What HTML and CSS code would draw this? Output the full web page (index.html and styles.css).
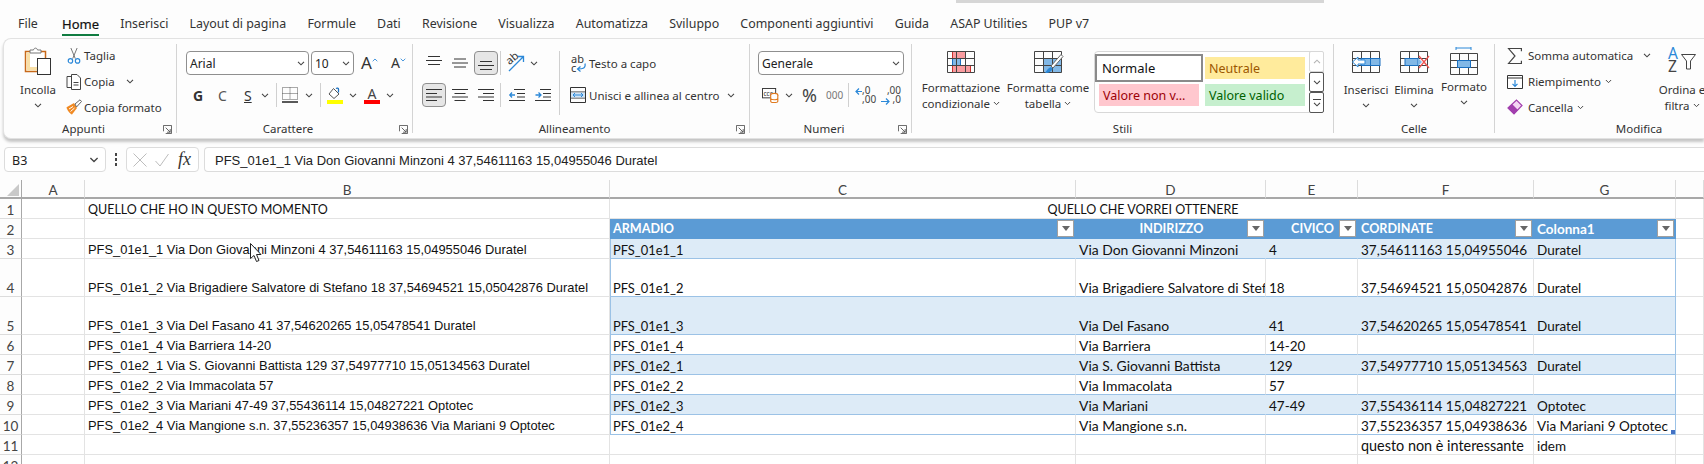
FILE: index.html
```html
<!DOCTYPE html>
<html lang="it">
<head>
<meta charset="utf-8">
<title>Excel</title>
<link rel="stylesheet" href="styles.css">
</head>
<body>
<svg class="defs" aria-hidden="true">
  <symbol id="chev" viewBox="0 0 8 5"><path d="M1 .8 4 3.8 7 .8" fill="none" stroke="#444" stroke-width="1.1"/></symbol>
  <symbol id="launch" viewBox="0 0 10 10"><path d="M.5 7V.5H9.500V9.500H3M3 3 8 8M8 4.500V8H4.500" fill="none" stroke="#555" stroke-width="1"/></symbol>
  <symbol id="lines-l" viewBox="0 0 16 14"><path d="M0 1.500H16M0 5.500H11M0 9H16M0 12.500H11" stroke="#333" fill="none"/></symbol>
  <symbol id="lines-c" viewBox="0 0 16 14"><path d="M0 1.500H16M2.500 5.500H13.500M0 9H16M2.500 12.500H13.500" stroke="#333" fill="none"/></symbol>
  <symbol id="lines-r" viewBox="0 0 16 14"><path d="M0 1.500H16M5 5.500H16M0 9H16M5 12.500H16" stroke="#333" fill="none"/></symbol>
  <symbol id="grid" viewBox="0 0 28 22"><path d="M.5.500H27.500V21.500H.5ZM.5 7.500H27.500M.5 14.500H27.500M9.500.5V21.500M18.500.5V21.500" fill="none" stroke="#444"/></symbol>
</svg>

<div class="topshade"></div>
<nav class="tabs">
  <span class="tab">File</span>
  <span class="tab tab-on">Home</span>
  <span class="tab">Inserisci</span>
  <span class="tab">Layout di pagina</span>
  <span class="tab">Formule</span>
  <span class="tab">Dati</span>
  <span class="tab">Revisione</span>
  <span class="tab">Visualizza</span>
  <span class="tab">Automatizza</span>
  <span class="tab">Sviluppo</span>
  <span class="tab">Componenti aggiuntivi</span>
  <span class="tab">Guida</span>
  <span class="tab">ASAP Utilities</span>
  <span class="tab">PUP v7</span>
</nav>

<section class="ribbon">
  <div class="group g-app">
    <div class="gbody">
      <div class="big b-paste">
        <svg class="ic-paste" viewBox="0 0 28 28"><path d="M1.500 4.500H21.500V24.500H1.500Z" fill="#fff" stroke="#c8691a" stroke-width="1.500"/><path d="M2.500 5.500H6V20H13V23.500H2.500Z" fill="#f9dfa6"/><path d="M6 6V3H9.500C10 .5 13 .5 13.500 3H17V6Z" fill="#fff" stroke="#777"/><rect x="13.500" y="11.500" width="13" height="16" fill="#fff" stroke="#333"/></svg>
        <span class="bt">Incolla</span>
        <svg class="chev ch-big"><use href="#chev"/></svg>
      </div>
      <div class="stack3 s-clip">
        <div class="srow"><span class="si"><svg class="i16" viewBox="0 0 16 18"><path d="M4.500 0 9.500 12M11.500 0 6.500 12" stroke="#666" fill="none"/><circle cx="4" cy="14.500" r="2.500" fill="none" stroke="#2b88d8" stroke-width="1.300"/><circle cx="12" cy="14.500" r="2.500" fill="none" stroke="#2b88d8" stroke-width="1.300"/></svg></span><span class="st">Taglia</span></div>
        <div class="srow"><span class="si"><svg class="i16" viewBox="0 0 16 16"><path d="M5 2.500H1V13.500H5" fill="none" stroke="#444"/><path d="M5.500.5H11L14.500 4V15.500H5.500Z" fill="#fff" stroke="#444"/><path d="M7.500 8.500H12.500M7.500 11H12.500" stroke="#444"/></svg></span><span class="st w-copia">Copia</span><svg class="chev"><use href="#chev"/></svg></div>
        <div class="srow"><span class="si"><svg class="i16" viewBox="0 0 16 16"><path d="M1 8 8 4 11 9 6 15.500C4 15 1 11 .5 8.500Z" fill="#f08a24"/><path d="M3 10 7 7.500M4.500 12.500 8.500 9" stroke="#fff"/><path d="M9 5 14 .8 15.500 2.500 10.500 8Z" fill="#fff" stroke="#666"/></svg></span><span class="st">Copia formato</span></div>
      </div>
    </div>
    <div class="glabel"><span class="gl">Appunti</span><svg class="launch"><use href="#launch"/></svg></div>
  </div>

  <div class="group g-car">
    <div class="gbody">
      <div class="stack2">
        <div class="crow">
          <div class="combo c-font"><span>Arial</span><svg class="chev"><use href="#chev"/></svg></div>
          <div class="combo c-size"><span>10</span><svg class="chev"><use href="#chev"/></svg></div>
          <span class="ab a-grow">A<svg class="caret" viewBox="0 0 7 4"><path d="M.8 3.500 3.500.8 6.200 3.500" fill="none" stroke="#2b88d8"/></svg></span>
          <span class="ab a-shrink">A<svg class="caret" viewBox="0 0 7 4"><path d="M.8.5 3.500 3.200 6.200.5" fill="none" stroke="#2b88d8"/></svg></span>
        </div>
        <div class="crow r-fmt">
          <b class="l-g">G</b><span class="l-c">C</span><span class="l-s">S</span>
          <svg class="chev ch-s"><use href="#chev"/></svg>
          <i class="vsep vs-1"></i>
          <svg class="i16 ic-bord" viewBox="0 0 16 16"><path d="M.5.500H15.500V12.500H.5ZM8 .5V12.500M.5 6.500H15.500" fill="none" stroke="#555" stroke-dasharray="1 1"/><path d="M0 15H16" stroke="#222" stroke-width="1.400"/></svg>
          <svg class="chev ch-b"><use href="#chev"/></svg>
          <i class="vsep vs-2"></i>
          <span class="colorbtn cb-fill"><svg class="i16" viewBox="0 0 16 12"><path d="M6.500 1.500 12 7 7 11.500 2 7Z" fill="#fff" stroke="#555"/><path d="M11.500 5.500V2C11.500 1 10 .8 9 1.500" fill="none" stroke="#1a6fc0" stroke-width="1.300"/></svg><i class="bar bar-y"></i></span>
          <svg class="chev ch-f"><use href="#chev"/></svg>
          <span class="colorbtn cb-a"><span class="fa">A</span><i class="bar bar-r"></i></span>
          <svg class="chev ch-a"><use href="#chev"/></svg>
        </div>
      </div>
    </div>
    <div class="glabel"><span class="gl">Carattere</span><svg class="launch"><use href="#launch"/></svg></div>
  </div>

  <div class="group g-all">
    <div class="gbody">
      <div class="stack2 s-al">
        <div class="crow">
          <span class="tb"><svg class="i-al" viewBox="0 0 16 14"><path d="M2 .5H14M0 4.500H16M2 8.500H14" stroke="#333" fill="none"/></svg></span>
          <span class="tb"><svg class="i-al" viewBox="0 0 16 14"><path d="M2 3H14M0 7H16M2 11H14" stroke="#333" fill="none"/></svg></span>
          <span class="tb tb-on"><svg class="i-al" viewBox="0 0 16 14"><path d="M2 5.500H14M0 9.500H16M2 13.500H14" stroke="#333" fill="none"/></svg></span>
          <i class="vsep vs-al"></i>
          <span class="tb tb-or"><svg class="i18" viewBox="0 0 18 18"><text x="0" y="9" class="svgt" transform="rotate(-40 4 8)">ab</text><path d="M1 17 15 3M10 2.500H15.500V8" fill="none" stroke="#2b88d8" stroke-width="1.300"/></svg></span>
          <svg class="chev"><use href="#chev"/></svg>
        </div>
        <div class="crow">
          <span class="tb tb-on"><svg class="i-al" viewBox="0 0 16 14"><use href="#lines-l"/></svg></span>
          <span class="tb"><svg class="i-al" viewBox="0 0 16 14"><use href="#lines-c"/></svg></span>
          <span class="tb"><svg class="i-al" viewBox="0 0 16 14"><use href="#lines-r"/></svg></span>
          <i class="vsep vs-al"></i>
          <span class="tb tb-in"><svg class="i-al" viewBox="0 0 16 14"><path d="M5 1.500H16M8 5.500H16M8 9H16M0 12.500H16" stroke="#333" fill="none"/><path d="M.5 7H6M3 4.500.8 7 3 9.500" stroke="#2b88d8" fill="none" stroke-width="1.300"/></svg></span>
          <span class="tb tb-in2"><svg class="i-al" viewBox="0 0 16 14"><path d="M5 1.500H16M8 5.500H16M8 9H16M0 12.500H16" stroke="#333" fill="none"/><path d="M.5 7H6M3.500 4.500 6 7 3.500 9.500" stroke="#2b88d8" fill="none" stroke-width="1.300"/></svg></span>
        </div>
      </div>
      <i class="vsep vs-tall"></i>
      <div class="stack2 s-wrap">
        <div class="crow wr"><span class="wic"><span class="abc">ab<br>c</span><svg class="warrow" viewBox="0 0 10 9"><path d="M9 .5C10 5 7 6 2 6M4.500 3.500 1.500 6 4.500 8.500" fill="none" stroke="#2b88d8" stroke-width="1.200"/></svg></span><span class="st">Testo a capo</span></div>
        <div class="crow wr"><svg class="i-merge" viewBox="0 0 16 16"><path d="M.5.500H15.500V15.500H.5ZM.5 5H15.500M.5 11H15.500" fill="none" stroke="#333"/><rect x="1" y="5.500" width="14" height="5" fill="#cfe4f7"/><path d="M3 8H13M5 6 3 8 5 10M11 6 13 8 11 10" fill="none" stroke="#2b88d8"/></svg><span class="st w-merge">Unisci e allinea al centro</span><svg class="chev"><use href="#chev"/></svg></div>
      </div>
    </div>
    <div class="glabel"><span class="gl">Allineamento</span><svg class="launch"><use href="#launch"/></svg></div>
  </div>

  <div class="group g-num">
    <div class="gbody">
      <div class="stack2 s-num">
        <div class="combo c-gen"><span>Generale</span><svg class="chev"><use href="#chev"/></svg></div>
        <div class="crow r-num">
          <svg class="i-acc" viewBox="0 0 18 16"><rect x=".5" y=".5" width="14" height="10" fill="#fff" stroke="#333"/><text x="1.500" y="8" class="svgs">ccc</text><ellipse cx="13" cy="7.500" rx="3.800" ry="1.800" fill="#fff" stroke="#e07a1f" stroke-width="1.200"/><path d="M9.200 7.500V14C9.200 16 16.800 16 16.800 14V7.500M9.200 11C9.200 13 16.800 13 16.800 11" fill="#fff" stroke="#e07a1f" stroke-width="1.200"/></svg>
          <svg class="chev ch-acc"><use href="#chev"/></svg>
          <span class="pct">%</span>
          <span class="mil">000</span>
          <i class="vsep vs-num"></i>
          <span class="dec d1"><svg class="darr" viewBox="0 0 7 9"><path d="M7 4.500H1M4 1.500 1 4.500 4 7.500" fill="none" stroke="#2b88d8" stroke-width="1.200"/></svg><span class="dtx">,0<br>,00</span></span>
          <span class="dec d2"><span class="dtx tr">,00<br>,0</span><svg class="darr da2" viewBox="0 0 9 9"><path d="M0 4.500H8M5 1.500 8 4.500 5 7.500" fill="none" stroke="#2b88d8" stroke-width="1.200"/></svg></span>
        </div>
      </div>
    </div>
    <div class="glabel"><span class="gl">Numeri</span><svg class="launch"><use href="#launch"/></svg></div>
  </div>

  <div class="group g-sti">
    <div class="gbody">
      <div class="big b-cf">
        <svg class="ic-grid" viewBox="0 0 28 22"><rect x="5.500" y=".5" width="13" height="7" fill="#f99ca0" stroke="#c9302c"/><rect x="5.500" y="7.500" width="8" height="7" fill="#82b8e6" stroke="#1a6fc0"/><rect x="5.500" y="14.500" width="18" height="7" fill="#f99ca0" stroke="#c9302c"/><use href="#grid" width="28" height="22"/></svg>
        <span class="bt">Formattazione</span>
        <span class="bt">condizionale<svg class="chev ch-in"><use href="#chev"/></svg></span>
      </div>
      <div class="big b-tf">
        <svg class="ic-grid" viewBox="0 0 28 22"><rect x="9.500" y="7.500" width="18" height="14" fill="#82b8e6"/><use href="#grid" width="28" height="22"/><path d="M11 22C13 19 14 17 17 16 19 17 19 19 17 20 15 22 13 22 11 22Z" fill="#2b88d8"/><path d="M17 15 27 3.500 29 5.500 19 17Z" fill="#fff" stroke="#666"/></svg>
        <span class="bt">Formatta come</span>
        <span class="bt">tabella<svg class="chev ch-in"><use href="#chev"/></svg></span>
      </div>
      <div class="gallery">
        <div class="gcells">
          <span class="sty sty-norm">Normale</span>
          <span class="sty sty-neu">Neutrale</span>
          <span class="sty sty-bad">Valore non v...</span>
          <span class="sty sty-good">Valore valido</span>
        </div>
        <div class="gscroll">
          <span class="gs gs-off"><svg class="chev"><use href="#chev"/></svg></span>
          <span class="gs"><svg class="chev"><use href="#chev"/></svg></span>
          <span class="gs gs-more"><i class="gs-line"></i><svg class="chev"><use href="#chev"/></svg></span>
        </div>
      </div>
    </div>
    <div class="glabel"><span class="gl">Stili</span></div>
  </div>

  <div class="group g-cel">
    <div class="gbody">
      <div class="big b-cell b-ins">
        <svg class="ic-grid" viewBox="0 0 28 22"><use href="#grid" width="28" height="22"/><rect x="9" y="7.500" width="19" height="7" fill="#82b8e6" stroke="#1a6fc0"/><path d="M18.500 7.500V14.500" stroke="#1a6fc0"/><path d="M13 9H6V6L.5 11 6 16V13H13Z" fill="#fff" stroke="#2b88d8"/></svg>
        <span class="bt">Inserisci</span>
        <svg class="chev ch-big"><use href="#chev"/></svg>
      </div>
      <div class="big b-cell b-eli">
        <svg class="ic-grid" viewBox="0 0 28 22"><use href="#grid" width="28" height="22"/><rect x="5" y="7.500" width="13" height="7" fill="#82b8e6" stroke="#1a6fc0"/><path d="M18 7 22 11 18 15Z" fill="#82b8e6"/><path d="M19 5 29 17M29 5 19 17" stroke="#ef5350" stroke-width="1.300"/></svg>
        <span class="bt">Elimina</span>
        <svg class="chev ch-big"><use href="#chev"/></svg>
      </div>
      <div class="big b-cell b-for">
        <svg class="ic-fmt" viewBox="0 0 28 28"><path d="M6 1H21M6 0V3M21 0V3" stroke="#2b88d8" fill="none"/><g transform="translate(0 6)"><use href="#grid" width="28" height="22"/><rect x="7.500" y="7.500" width="13" height="7" fill="#82b8e6" stroke="#1a6fc0"/></g></svg>
        <span class="bt">Formato</span>
        <svg class="chev ch-big"><use href="#chev"/></svg>
      </div>
    </div>
    <div class="glabel"><span class="gl">Celle</span></div>
  </div>

  <div class="group g-mod">
    <div class="gbody">
      <div class="stack3 s-mod">
        <div class="srow"><span class="si"><svg class="i16" viewBox="0 0 14 15"><path d="M13 3V.5H1L7 7.500 1 14.500H13V12" fill="none" stroke="#444" stroke-width="1.100"/></svg></span><span class="st w-som">Somma automatica</span><svg class="chev"><use href="#chev"/></svg></div>
        <div class="srow"><span class="si"><svg class="i16" viewBox="0 0 16 16"><path d="M.5 1.500H15.500V14.500H.5Z" fill="#fff" stroke="#333"/><path d="M.5 4H15.500" stroke="#333"/><path d="M8 6V12M5.500 9.800 8 12.300 10.500 9.800" fill="none" stroke="#2b88d8" stroke-width="1.200"/></svg></span><span class="st">Riempimento</span><svg class="chev ch-tx"><use href="#chev"/></svg></div>
        <div class="srow"><span class="si"><svg class="i16" viewBox="0 0 16 16"><path d="M1 9 9.500 1 15 6.500 7 15Z" fill="#f4d6f4" stroke="#a23fae" stroke-width="1.200"/><path d="M1 9 5 5 11 11 7 15Z" fill="#a23fae"/></svg></span><span class="st">Cancella</span><svg class="chev ch-tx"><use href="#chev"/></svg></div>
      </div>
      <div class="big b-sort">
        <span class="sorti"><span class="az"><span class="az-a">A</span><span class="az-z">Z</span></span><svg class="funnel" viewBox="0 0 15 16"><path d="M.5.500H14.500L9.500 7V15H5.500V7Z" fill="#fff" stroke="#444"/></svg></span>
        <span class="bt">Ordina e</span>
        <span class="bt">filtra<svg class="chev ch-in"><use href="#chev"/></svg></span>
      </div>
    </div>
    <div class="glabel"><span class="gl">Modifica</span></div>
  </div>
</section>

<div class="fbar">
  <div class="namebox"><span>B3</span><svg class="chev ch-nm"><use href="#chev"/></svg></div>
  <span class="dots"></span>
  <div class="fbtns">
    <svg class="fb" viewBox="0 0 14 14"><path d="M.5.500 13.500 13.500M13.500.500 .5 13.500" stroke="#bdbdbd" fill="none"/></svg>
    <svg class="fb" viewBox="0 0 14 14"><path d="M.5 8 5 13 13.500 1" stroke="#bdbdbd" fill="none"/></svg>
    <span class="fx">fx</span>
  </div>
  <div class="finput">PFS_01e1_1 Via Don Giovanni Minzoni 4 37,54611163 15,04955046 Duratel</div>
</div>

<table class="sheet">
  <colgroup><col class="k0"><col class="k1"><col class="k2"><col class="k3"><col class="k4"><col class="k5"><col class="k6"><col class="k7"><col class="k8"></colgroup>
  <tr class="rh">
    <th class="corner"><svg class="tri" viewBox="0 0 12 12"><path d="M12 0V12H0Z" fill="#c9c9c9"/></svg></th><th>A</th><th>B</th><th>C</th><th>D</th><th>E</th><th>F</th><th>G</th><th></th>
  </tr>
  <tr class="r20">
    <td class="rn">1</td><td></td><td class="ar cal">QUELLO CHE HO IN QUESTO MOMENTO</td><td colspan="5" class="mid">QUELLO CHE VORREI OTTENERE</td><td></td>
  </tr>
  <tr class="r20 thd">
    <td class="rn">2</td><td></td><td></td>
    <td class="h"><div class="hd"><span class="cp">ARMADIO</span><i class="flt"></i></div></td>
    <td class="h"><div class="hd"><span class="ctr cp">INDIRIZZO</span><i class="flt"></i></div></td>
    <td class="h"><div class="hd"><span class="ctr cp">CIVICO</span><i class="flt"></i></div></td>
    <td class="h"><div class="hd"><span class="cp">CORDINATE</span><i class="flt"></i></div></td>
    <td class="h"><div class="hd"><span>Colonna1</span><i class="flt"></i></div></td>
    <td></td>
  </tr>
  <tr class="r20 sh">
    <td class="rn">3</td><td></td><td class="ar">PFS_01e1_1 Via Don Giovanni Minzoni 4 37,54611163 15,04955046 Duratel</td>
    <td class="t tf">PFS_01e1_1</td><td class="t va">Via Don Giovanni Minzoni</td><td class="t">4</td><td class="t">37,54611163 15,04955046</td><td class="t tl">Duratel</td><td></td>
  </tr>
  <tr class="r38">
    <td class="rn">4</td><td></td><td class="ar">PFS_01e1_2 Via Brigadiere Salvatore di Stefano 18 37,54694521 15,05042876 Duratel</td>
    <td class="t tf">PFS_01e1_2</td><td class="t va">Via Brigadiere Salvatore di Stefano</td><td class="t">18</td><td class="t">37,54694521 15,05042876</td><td class="t tl">Duratel</td><td></td>
  </tr>
  <tr class="r38 sh">
    <td class="rn">5</td><td></td><td class="ar">PFS_01e1_3 Via Del Fasano 41 37,54620265 15,05478541 Duratel</td>
    <td class="t tf">PFS_01e1_3</td><td class="t va">Via Del Fasano</td><td class="t">41</td><td class="t">37,54620265 15,05478541</td><td class="t tl">Duratel</td><td></td>
  </tr>
  <tr class="r20">
    <td class="rn">6</td><td></td><td class="ar">PFS_01e1_4 Via Barriera 14-20</td>
    <td class="t tf">PFS_01e1_4</td><td class="t va">Via Barriera</td><td class="t">14-20</td><td class="t"></td><td class="t tl"></td><td></td>
  </tr>
  <tr class="r20 sh">
    <td class="rn">7</td><td></td><td class="ar">PFS_01e2_1 Via S. Giovanni Battista 129 37,54977710 15,05134563 Duratel</td>
    <td class="t tf">PFS_01e2_1</td><td class="t va">Via S. Giovanni Battista</td><td class="t">129</td><td class="t">37,54977710 15,05134563</td><td class="t tl">Duratel</td><td></td>
  </tr>
  <tr class="r20">
    <td class="rn">8</td><td></td><td class="ar">PFS_01e2_2 Via Immacolata 57</td>
    <td class="t tf">PFS_01e2_2</td><td class="t va">Via Immacolata</td><td class="t">57</td><td class="t"></td><td class="t tl"></td><td></td>
  </tr>
  <tr class="r20 sh">
    <td class="rn">9</td><td></td><td class="ar">PFS_01e2_3 Via Mariani 47-49 37,55436114 15,04827221 Optotec</td>
    <td class="t tf">PFS_01e2_3</td><td class="t va">Via Mariani</td><td class="t">47-49</td><td class="t">37,55436114 15,04827221</td><td class="t tl">Optotec</td><td></td>
  </tr>
  <tr class="r20">
    <td class="rn">10</td><td></td><td class="ar">PFS_01e2_4 Via Mangione s.n. 37,55236357 15,04938636 Via Mariani 9 Optotec</td>
    <td class="t tf">PFS_01e2_4</td><td class="t va">Via Mangione s.n.</td><td class="t"></td><td class="t">37,55236357 15,04938636</td><td class="t tl tcorner">Via Mariani 9 Optotec<i class="grip"></i></td><td></td>
  </tr>
  <tr class="r20">
    <td class="rn">11</td><td></td><td></td><td></td><td></td><td></td><td class="q">questo non è interessante</td><td>idem</td><td></td>
  </tr>
  <tr class="r20">
    <td class="rn">12</td><td></td><td></td><td></td><td></td><td></td><td></td><td></td><td></td>
  </tr>
</table>

<svg class="cursor" viewBox="0 0 11 19"><path d="M.5.500V15.500L4 12.500 6.500 18.500 9 17.500 6.500 11.500H11Z" fill="#fff" stroke="#222"/></svg>
</body>
</html>
```
FILE: styles.css
```css
* { box-sizing: border-box; }
html, body { margin: 0; padding: 0; height: 464px; overflow: hidden; }
body {
  background: #fdfdfd;
  color: #222;
  font-family: "Noto Sans", "Open Sans", sans-serif;
  font-size: 11.5px;
  position: relative;
}
.defs { position: absolute; width: 0; height: 0; }
svg { display: block; flex: none; overflow: visible; }
i { display: block; font-style: normal; }

.topshade { height: 3px; width: 368px; margin-left: 956px; background: #d6d6d6; }

/* tabs */
.tabs { height: 35px; display: flex; padding-left: 18px; gap: 21.2px; }
.tab { font-size: 12.4px; line-height: 16px; padding-top: 13px; height: 33px; color: #333; white-space: nowrap; }
.tab-on { border-bottom: 2px solid #107c41; height: 33px; color: #111; -webkit-text-stroke: .2px #111; margin-left: 3px; font-size: 13px; }

/* ribbon */
.ribbon {
  height: 101px;
  margin-left: 3px;
  padding-top: 5px;
  background: #fdfdfd;
  border: 1px solid #e2e2e2;
  border-right: 0;
  border-radius: 8px 0 0 8px;
  box-shadow: 0 3px 3px rgba(0,0,0,.22);
  display: flex;
  overflow: hidden;
}
.group { height: 89px; flex: none; display: flex; flex-direction: column; border-right: 1px solid #d4d4d4; }
.gbody { height: 75px; flex: none; display: flex; }
.glabel { height: 20px; flex: none; display: flex; align-items: center; }
.gl { flex: 1; text-align: center; font-size: 11.5px; color: #333; line-height: 20px; }
.launch { width: 9px; height: 9px; margin: 0 4px 0 0; }
.g-app { width: 173px; }
.g-car { width: 236px; }
.g-all { width: 337px; }
.g-num { width: 162px; }
.g-sti { width: 422px; }
.g-cel { width: 161px; }
.g-mod { width: 288px; border-right: 0; }

.chev { width: 8px; height: 5px; }
.ch-in { display: inline-block; margin-left: 3px; vertical-align: 2px; width: 7px; }

/* big buttons */
.big { display: flex; flex-direction: column; align-items: center; padding-top: 3px; }
.bt { line-height: 16px; white-space: nowrap; color: #333; }
.ch-big { margin-top: 5px; }
.b-paste { width: 46px; margin-left: 11px; }
.ic-paste { width: 28px; height: 28px; margin-bottom: 7px; }
.ic-grid { width: 28px; height: 22px; margin: 4px 0 9px; }
.ic-fmt { width: 28px; height: 28px; margin: 0 0 5px; }

/* small stacks */
.stack3 { display: flex; flex-direction: column; gap: 2px; }
.srow { height: 24px; display: flex; align-items: center; color: #333; }
.si { width: 20px; display: flex; justify-content: center; }
.i16 { width: 16px; height: 16px; }
.st { white-space: nowrap; color: #333; }
.s-clip { margin-left: 3px; }
.w-copia { width: 42px; }

/* two-row stacks */
.stack2 { display: flex; flex-direction: column; gap: 8px; padding-top: 7px; }
.crow { height: 24px; display: flex; align-items: center; }
.g-car .stack2 { margin-left: 9px; }
.combo {
  height: 24px;
  border: 1px solid #8f8f8f;
  border-radius: 4px;
  background: #fff;
  display: flex;
  align-items: center;
  justify-content: space-between;
  padding: 0 3px;
  color: #222;
  font-size: 12px;
}
.c-font { width: 123px; }
.c-size { width: 43px; margin-left: 2px; }
.ab { font-size: 17px; line-height: 24px; color: #333; display: flex; }
.a-grow { margin-left: 7px; }
.a-shrink { margin-left: 13px; font-size: 14px; }
.caret { width: 6px; height: 4px; margin-top: 7px; }

.r-fmt { color: #333; }
.l-g { width: 11px; margin-left: 7px; font-size: 14px; }
.l-c { width: 12px; margin-left: 14px; font-size: 14px; color: #555; }
.l-s { width: 10px; margin-left: 14px; font-size: 14px; text-decoration: underline; }
.ch-s { margin-left: 7px; }
.vsep { width: 1px; height: 24px; background: #d0d0d0; flex: none; }
.vs-1 { margin-left: 7px; }
.ic-bord { margin-left: 5px; }
.ch-b { margin-left: 7px; }
.vs-2 { margin-left: 7px; }
.colorbtn { display: flex; flex-direction: column; align-items: center; width: 16px; }
.cb-fill { margin-left: 6px; }
.cb-fill .i16 { height: 12px; }
.ch-f { margin-left: 6px; }
.bar { width: 16px; height: 4px; }
.bar-y { background: #ffff00; margin-top: 1px; }
.bar-r { background: #ff0000; }
.cb-a { margin-left: 7px; }
.fa { font-size: 14px; line-height: 13px; color: #444; }
.ch-a { margin-left: 6px; }

/* alignment */
.s-al { margin-left: 9px; width: 137px; }
.tb { width: 24px; height: 24px; display: flex; align-items: center; justify-content: center; border: 1px solid transparent; border-radius: 4px; margin-right: 2px; }
.tb-on { background: #e6e6e6; border-color: #8f8f8f; }
.i-al { width: 16px; height: 14px; }
.i18 { width: 18px; height: 18px; }
.vs-al { margin: 0 1px 0 0; }
.tb-or { margin-left: 3px; margin-right: 1px; }
.tb-in { margin-left: 3px; }
.svgt { font: 11px "Noto Sans", sans-serif; fill: #333; }
.svgs { font: 7px "Noto Sans", sans-serif; fill: #333; }
.vs-tall { height: 64px; margin: 7px 0 0 0; }
.s-wrap { margin-left: 11px; }
.wr { color: #333; }
.wic { width: 18px; height: 20px; position: relative; display: block; }
.abc { display: block; font-size: 11px; line-height: 9px; color: #333; margin-top: 1px; }
.warrow { position: absolute; left: 5px; top: 10px; width: 10px; height: 9px; }
.i-merge { width: 16px; height: 16px; margin-right: 3px; margin-left: -1px; }
.w-merge { width: 138px; }

/* number */
.s-num { margin-left: 8px; }
.c-gen { width: 146px; }
.r-num { width: 146px; }
.i-acc { width: 17px; height: 15px; margin-left: 4px; }
.ch-acc { margin-left: 6px; }
.pct { font-size: 18px; color: #444; margin-left: 9px; width: 22px; }
.mil { font-size: 10px; color: #777; margin-left: 2px; width: 20px; }
.vs-num { margin-left: 2px; }
.dec { display: flex; align-items: center; width: 20px; position: relative; font-size: 10px; line-height: 9px; color: #444; }
.d1 { margin-left: 6px; }
.d2 { margin-left: 6px; }
.darr { width: 7px; height: 9px; margin-top: -8px; }
.da2 { position: absolute; left: 0; top: 11px; width: 9px; margin: 0; }
.dtx { display: block; white-space: nowrap; }
.tr { text-align: right; width: 100%; }

/* styles */
.b-cf { width: 84px; margin-left: 7px; }
.b-tf { width: 84px; margin-left: 3px; }
.b-cf .ic-grid, .b-tf .ic-grid { margin: 4px 0 7px; }
.gallery {
  width: 230px;
  height: 62px;
  margin: 7px 0 0 4px;
  border: 1px solid #d8d8d8;
  border-radius: 4px;
  display: flex;
  background: #fff;
}
.gcells { width: 214px; display: grid; grid-template-columns: 108px 100px; column-gap: 2px; padding: 2px 0 0 0; align-content: start; }
.sty { margin-top: 0; display: flex; align-items: center; font-size: 12.5px; padding-left: 4px; white-space: nowrap; }
.sty-norm { border: 2px solid #8a8a8a; background: #fff; box-shadow: inset 0 0 0 1px #fff; color: #111; padding-left: 5px; height: 28px; font-size: 13px; }
.sty-neu { background: #ffeb9c; color: #9c5700; height: 22px; margin-top: 3px; }
.sty-bad { background: #ffc7ce; color: #9c0006; height: 22px; margin: 2px 4px 0; }
.sty-good { background: #c6efce; color: #006100; height: 22px; margin-top: 2px; }
.gscroll { margin-left: auto; width: 15px; display: flex; flex-direction: column; margin-top: -1px; margin-bottom: -1px; margin-right: -1px; }
.gs { flex: 1; border: 1px solid #555; border-radius: 2px; display: flex; align-items: center; justify-content: center; background: #fff; }
.gs-off { border-color: #d8d8d8; }
.gs-off .chev { transform: rotate(180deg); opacity: .4; }
.gs-more { flex-direction: column; gap: 2px; }
.gs-line { width: 8px; height: 1px; background: #444; }

/* cells */
.b-cell { width: 48px; }
.b-ins { margin-left: 8px; }
.b-for { margin-left: 2px; }
.b-for .bt { margin-top: -1px; }

/* editing */
.s-mod { margin-left: 10px; width: 154px; }
.s-mod .st { margin-left: 3px; }
.w-som { width: 115px; }
.ch-tx { margin-left: 4px; width: 7px; }
.b-sort { width: 48px; margin-left: -1px; }
.sorti { height: 32px; display: flex; margin-bottom: 3px; }
.az { width: 12px; display: flex; flex-direction: column; font-size: 15.5px; line-height: 13px; margin-right: 1px; }
.az-a { color: #2b88d8; }
.az-z { color: #444; }
.funnel { width: 15px; height: 16px; margin-top: 7px; }

/* formula bar */
.fbar { height: 25px; margin-top: 8px; padding-left: 4px; display: flex; align-items: stretch; background: #fdfdfd; }
.namebox, .fbtns, .finput { border: 1px solid #dcdcdc; border-radius: 4px; background: #fff; }
.namebox { width: 102px; display: flex; align-items: center; justify-content: space-between; padding: 1px 6px 0 7px; font-size: 12.5px; }
.ch-nm { width: 10px; height: 6px; }
.dots { width: 20px; background: radial-gradient(circle, #444 1.200px, transparent 1.400px) center / 4px 5px repeat-y; margin: 5px 0; }
.fbtns { width: 73px; display: flex; align-items: center; padding-left: 6px; gap: 8px; }
.fb { width: 14px; height: 14px; }
.fx { font-family: "Liberation Serif", serif; font-style: italic; font-size: 18px; color: #333; margin-left: 1px; }
.finput { flex: 1; margin-left: 5px; border-right: 0; border-radius: 4px 0 0 4px; padding: 1px 0 0 10px; display: flex; align-items: center; font-family: "Liberation Sans", sans-serif; font-size: 13px; color: #222; white-space: nowrap; }

/* sheet */
.sheet { margin-top: 8px; width: 1704px; table-layout: fixed; border-collapse: separate; border-spacing: 0; background: #fff; font-family: Lato, sans-serif; font-size: 13.5px; color: #111; }
.k0 { width: 22px; } .k1 { width: 63px; } .k2 { width: 525px; } .k3 { width: 466px; } .k4 { width: 190px; }
.k5 { width: 92px; } .k6 { width: 176px; } .k7 { width: 142px; } .k8 { width: 28px; }
.sheet th { height: 19px; padding: 3px 0 0; line-height: 14px; font-weight: 400; font-size: 13.5px; color: #444; text-align: center; background: #fdfdfd; border-right: 1px solid #dcdcdc; border-bottom: 2px solid #a8a8a8; }
.sheet .corner { border-right: 1px solid #a8a8a8; padding: 0; }
.tri { width: 12px; height: 12px; margin: 3px 0 0 7px; }
.sheet td { padding: 0 2px 0 3px; vertical-align: bottom; line-height: 16px; white-space: nowrap; overflow: hidden; border-right: 1px solid #e3e3e3; border-bottom: 1px solid #e3e3e3; }
.r20 td { height: 20px; }
.r38 td { height: 38px; }
.sheet .rn { padding: 0; text-align: center; color: #444; border-right: 1px solid #a8a8a8; border-bottom-color: #dcdcdc; background: #fdfdfd; font-size: 13.5px; }
.sheet .ar { font-family: "Liberation Sans", Arial, sans-serif; font-size: 12.9px; }
.sheet .cal { font-family: Lato, sans-serif; font-size: 12.5px; }
.sheet .mid { text-align: center; font-size: 12.5px; }
.sheet .h { background: #5b9bd5; color: #fff; font-weight: 700; padding: 0 1px 0 3px; border-color: #5b9bd5; }
.hd { display: flex; align-items: center; justify-content: space-between; height: 19px; padding-top: 1px; }
.hd span { flex: 1; }
.hd .cp { font-size: 12.6px; }
.hd .ctr { text-align: center; padding-left: 17px; }
.flt { width: 17px; height: 17px; flex: none; background: #fff; border: 1px solid #a0a0a0; position: relative; margin-top: -1px; }
.flt::after { content: ""; position: absolute; left: 3.500px; top: 5px; border: 4.500px solid transparent; border-top: 5px solid #666; border-bottom: 0; }
.sheet .t { border-bottom-color: #9bc2e6; }
.sh .t { background: #ddebf7; border-right-color: #ddebf7; }
.sheet .tf { box-shadow: inset 1px 0 #9bc2e6; font-size: 12.9px; }
.sheet .va { font-size: 13.9px; }
.sheet .q { font-size: 14.4px; }
.sheet .tl { border-right-color: #9bc2e6; }
.tcorner { position: relative; }
.grip { position: absolute; right: 0; bottom: 0; width: 4px; height: 4px; background: #4472c4; }

.cursor { position: absolute; left: 250px; top: 243px; width: 11px; height: 19px; }
```
